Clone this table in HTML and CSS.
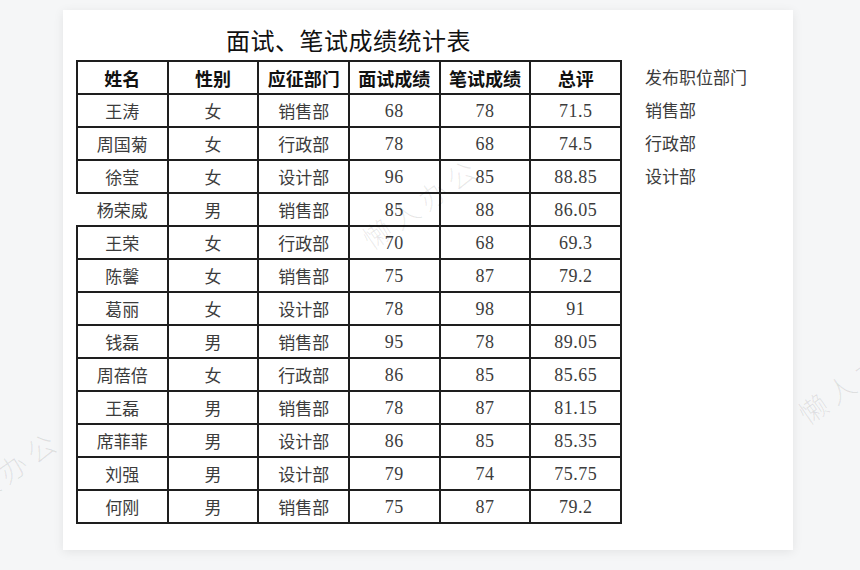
FILE: index.html
```html
<!DOCTYPE html>
<html lang="zh-CN">
<head>
<meta charset="utf-8">
<title>面试、笔试成绩统计表</title>
<link rel="stylesheet" href="styles.css">
</head>
<body>
<div class="sheet">
  <h1 class="title">面试、笔试成绩统计表</h1>
  <div class="content">
    <table class="scores">
      <thead>
        <tr><th>姓名</th><th>性别</th><th>应征部门</th><th>面试成绩</th><th>笔试成绩</th><th>总评</th></tr>
      </thead>
      <tbody>
        <tr><td>王涛</td><td>女</td><td>销售部</td><td class="num">68</td><td class="num">78</td><td class="num">71.5</td></tr>
        <tr><td>周国菊</td><td>女</td><td>行政部</td><td class="num">78</td><td class="num">68</td><td class="num">74.5</td></tr>
        <tr><td>徐莹</td><td>女</td><td>设计部</td><td class="num">96</td><td class="num">85</td><td class="num">88.85</td></tr>
        <tr class="open-left"><td>杨荣威</td><td>男</td><td>销售部</td><td class="num">85</td><td class="num">88</td><td class="num">86.05</td></tr>
        <tr><td>王荣</td><td>女</td><td>行政部</td><td class="num">70</td><td class="num">68</td><td class="num">69.3</td></tr>
        <tr><td>陈馨</td><td>女</td><td>销售部</td><td class="num">75</td><td class="num">87</td><td class="num">79.2</td></tr>
        <tr><td>葛丽</td><td>女</td><td>设计部</td><td class="num">78</td><td class="num">98</td><td class="num">91</td></tr>
        <tr><td>钱磊</td><td>男</td><td>销售部</td><td class="num">95</td><td class="num">78</td><td class="num">89.05</td></tr>
        <tr><td>周蓓倍</td><td>女</td><td>行政部</td><td class="num">86</td><td class="num">85</td><td class="num">85.65</td></tr>
        <tr><td>王磊</td><td>男</td><td>销售部</td><td class="num">78</td><td class="num">87</td><td class="num">81.15</td></tr>
        <tr><td>席菲菲</td><td>男</td><td>设计部</td><td class="num">86</td><td class="num">85</td><td class="num">85.35</td></tr>
        <tr><td>刘强</td><td>男</td><td>设计部</td><td class="num">79</td><td class="num">74</td><td class="num">75.75</td></tr>
        <tr><td>何刚</td><td>男</td><td>销售部</td><td class="num">75</td><td class="num">87</td><td class="num">79.2</td></tr>
      </tbody>
    </table>
    <ul class="depts">
      <li>发布职位部门</li>
      <li>销售部</li>
      <li>行政部</li>
      <li>设计部</li>
    </ul>
  </div>
</div>
<div class="wm-layer" aria-hidden="true">
  <span class="wm wm-center">懒人办公</span>
  <span class="wm wm-left">懒人办公</span>
  <span class="wm wm-right">懒人办公</span>
</div>
</body>
</html>
```
FILE: styles.css
```css
html, body {
  margin: 0;
  padding: 0;
  overflow: hidden;
}
body {
  width: 860px;
  height: 570px;
  position: relative;
  background: #f5f6f7;
  font-family: "Noto Sans CJK SC", "Noto Sans", sans-serif;
  padding: 10px 0 0 63px;
  box-sizing: border-box;
}
.sheet {
  width: 730px;
  height: 540px;
  background: #ffffff;
  box-shadow: 0 2px 10px rgba(0, 0, 0, 0.08);
  padding: 10px 0 0 13px;
  box-sizing: border-box;
}
.title {
  margin: 0;
  width: 545px;
  text-align: center;
  font-size: 24px;
  line-height: 40px;
  font-weight: 400;
  color: #111;
  letter-spacing: 0.5px;
}
.content {
  display: flex;
  align-items: flex-start;
  gap: 23px;
}
.scores {
  border-collapse: collapse;
  table-layout: fixed;
  width: 546px;
  flex: none;
}
.scores th,
.scores td {
  border: 2px solid #1e1e1e;
  height: 31px;
  padding: 0;
  text-align: center;
  vertical-align: middle;
  line-height: 20px;
  white-space: nowrap;
}
.scores th {
  font-size: 18px;
  font-weight: 700;
  color: #111;
}
.scores td {
  font-size: 17px;
  color: #3c3c3c;
  font-weight: 400;
}
.scores td.num {
  font-family: "Liberation Serif", "Noto Sans CJK SC", serif;
  font-size: 18px;
  letter-spacing: 0.5px;
}
.scores tr.open-left td:first-child {
  border-left-color: transparent;
}
.depts {
  list-style: none;
  margin: 0;
  padding: 0;
}
.depts li {
  height: 33px;
  line-height: 33px;
  font-size: 17px;
  color: #3c3c3c;
}
.wm-layer {
  position: absolute;
  left: 0;
  top: 0;
  width: 860px;
  height: 570px;
  overflow: hidden;
  pointer-events: none;
}
.wm {
  position: absolute;
  font-size: 28px;
  line-height: 28px;
  font-weight: 300;
  color: rgba(0, 0, 0, 0.09);
  letter-spacing: 6px;
  white-space: nowrap;
  transform: rotate(-35deg);
  transform-origin: left center;
}
.wm-center {
  left: 365px;
  top: 227px;
}
.wm-left {
  left: -55px;
  top: 500px;
}
.wm-right {
  left: 801px;
  top: 402px;
}
```
